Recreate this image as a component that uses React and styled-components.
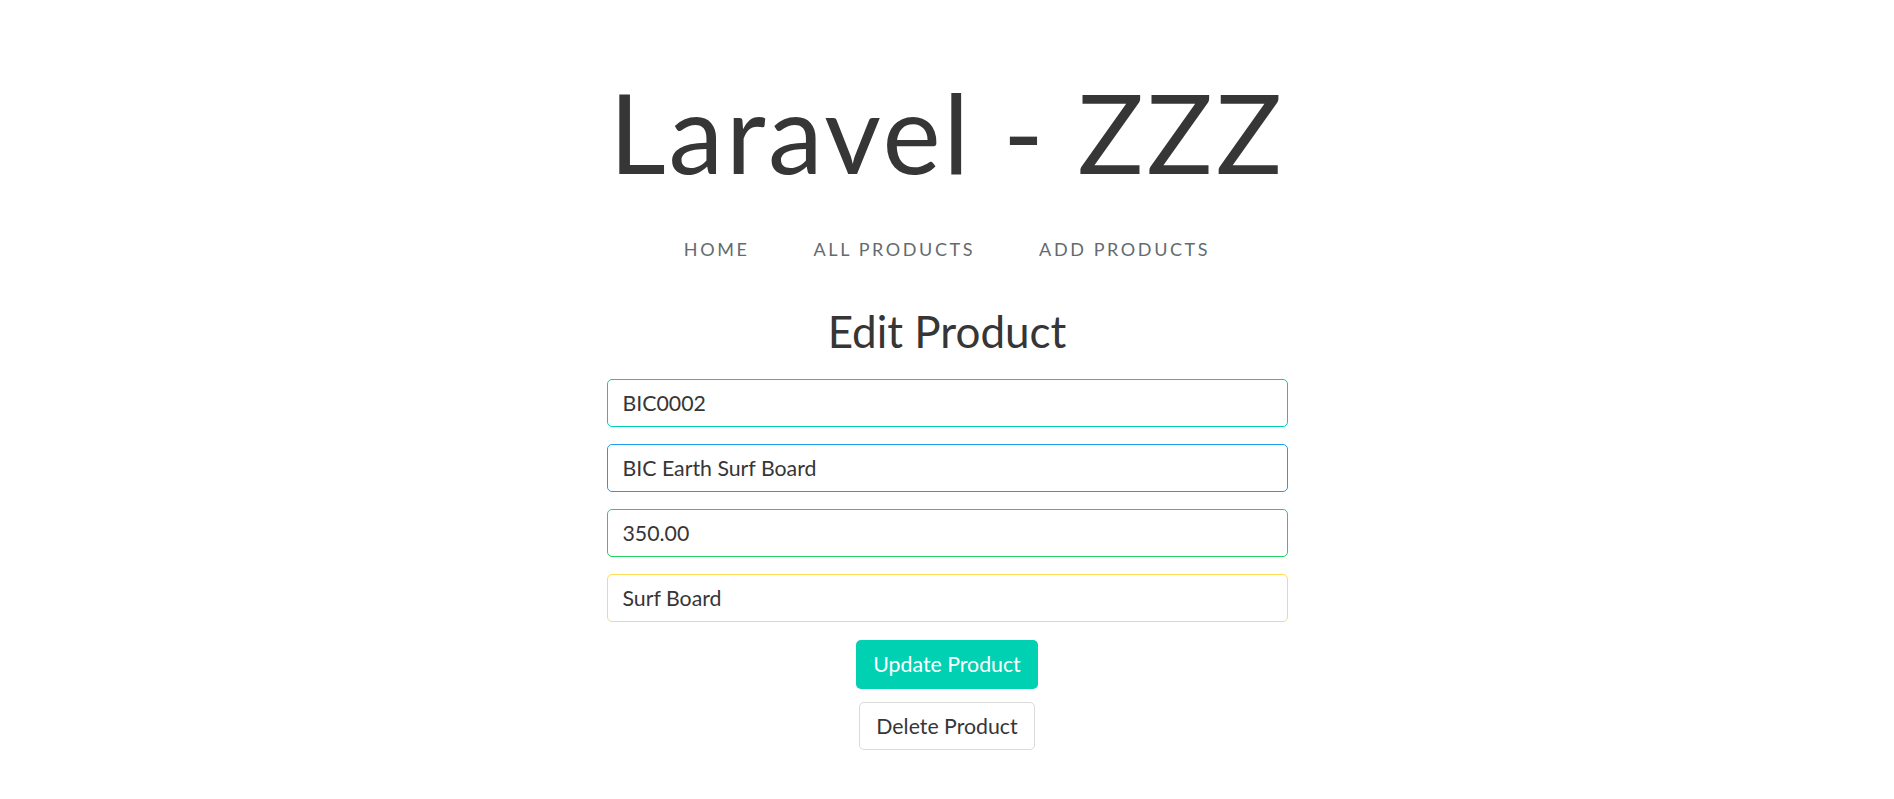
import React from "react";
import styled, { createGlobalStyle } from "styled-components";

const GlobalStyle = createGlobalStyle`
  html, body {
    margin: 0;
    padding: 0;
    background: #fff;
    font-family: Lato, "Noto Sans", sans-serif;
    color: #363636;
  }
`;

const Page = styled.div`
  display: flex;
  flex-direction: column;
  align-items: center;
  padding-top: 65px;
`;

const Title = styled.h1`
  margin: 0 0 42px;
  font-size: 110px;
  font-weight: 400;
  line-height: 1.2;
  letter-spacing: 2.8px;
  color: #363636;
`;

const Links = styled.nav`
  display: flex;
`;

const NavLink = styled.a`
  padding: 0 32px;
  font-size: 18px;
  line-height: 1.2;
  font-weight: 400;
  letter-spacing: 2.6px;
  text-transform: uppercase;
  text-decoration: none;
  color: #636b6f;
`;

const Heading = styled.h2`
  margin: 44px 0 21.6px;
  font-size: 44px;
  font-weight: 400;
  line-height: 1.2;
  color: #363636;
`;

const Form = styled.form`
  display: flex;
  flex-direction: column;
  align-items: center;
  gap: 17px;
  width: 681px;
`;

const Input = styled.input`
  box-sizing: border-box;
  width: 100%;
  height: 48px;
  padding: 0 15px;
  border: 1px solid ${(p) => p.$color};
  border-radius: 5px;
  font-family: inherit;
  font-size: 21.3px;
  color: #363636;
  outline: none;
`;

const Actions = styled.div`
  display: flex;
  flex-direction: column;
  align-items: center;
  gap: 13px;
  margin-top: 1px;
`;

const Button = styled.button`
  box-sizing: border-box;
  height: ${(p) => (p.$primary ? "49px" : "48px")};
  padding: 0 16px;
  border: 1px solid ${(p) => (p.$primary ? "transparent" : "#dbdbdb")};
  border-radius: 5px;
  background: ${(p) => (p.$primary ? "#00d1b2" : "#fff")};
  color: ${(p) => (p.$primary ? "#fff" : "#363636")};
  font-family: inherit;
  font-size: 21.3px;
  cursor: pointer;
`;

const fields = [
  { value: "BIC0002", color: "#00d1b2" },
  { value: "BIC Earth Surf Board", color: "#209cee" },
  { value: "350.00", color: "#23d160" },
  { value: "Surf Board", color: "#ffdd57" },
];

export default function App() {
  return (
    <>
      <GlobalStyle />
      <Page>
        <Title>Laravel - ZZZ</Title>
        <Links>
          <NavLink href="#">Home</NavLink>
          <NavLink href="#">All Products</NavLink>
          <NavLink href="#">Add Products</NavLink>
        </Links>
        <Heading>Edit Product</Heading>
        <Form onSubmit={(e) => e.preventDefault()}>
          {fields.map((f) => (
            <Input key={f.value} defaultValue={f.value} $color={f.color} />
          ))}
          <Actions>
            <Button type="submit" $primary>
              Update Product
            </Button>
            <Button type="button">Delete Product</Button>
          </Actions>
        </Form>
      </Page>
    </>
  );
}
